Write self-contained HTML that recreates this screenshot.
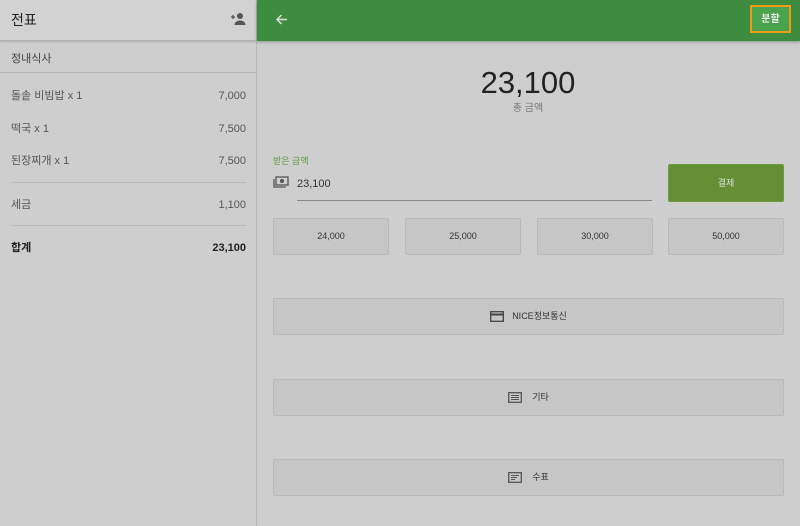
<!DOCTYPE html>
<html><head><meta charset="utf-8"><style>
*{box-sizing:border-box;margin:0;padding:0}
body{width:800px;height:526px;background:#cecece;font-family:"Liberation Sans","Noto Sans CJK KR",sans-serif;position:relative;overflow:hidden;color:#333}
.left{position:absolute;left:0;top:0;width:257px;height:526px;background:#cecece;border-right:1px solid #b8b8b8}
.lh{height:41px;background:#d2d2d2;border-bottom:1px solid #b0b0b0;box-shadow:0 1px 2px rgba(0,0,0,.15);position:relative}
.lh span{position:absolute;left:11px;top:11px;font-size:14px;line-height:18px;color:#222}
.sub{height:32px;border-bottom:1px solid #b8b8b8;font-size:11px;color:#444;padding:11px 0 0 11px;line-height:14px}
.row{position:absolute;left:11px;width:235px;height:14px;font-size:11px;line-height:14px;color:#555;display:flex;justify-content:space-between;align-items:center}
.row span{display:block;line-height:15px;height:14px}
.sep{position:absolute;left:11px;width:235px;height:1px;background:#bbb}
.top{position:absolute;left:257px;top:0;width:543px;height:41px;background:#3d8c40;box-shadow:0 1px 3px rgba(0,0,0,.3)}
.split{position:absolute;left:750px;top:5px;width:41px;height:28px;border:2px solid #f09a1a;background:#49a34c;color:#eee;font-size:10px;font-weight:bold;text-align:center;padding-top:7px;line-height:12px}
.btn{position:absolute;background:#c6c6c6;border:1px solid #b9b9b9;border-radius:2px;font-size:9px;color:#333;display:flex;align-items:center;justify-content:center;line-height:13px}
</style></head><body>
<div class="left">
<div class="lh"><span>전표</span>
<svg style="position:absolute;left:229px;top:12px" width="18" height="14" viewBox="0 0 18 14"><path d="M2 5h4M4 3v4" stroke="#555" stroke-width="1.3"/><circle cx="11" cy="4" r="3" fill="#555"/><path d="M5.5 13c0-3 3-4.5 5.5-4.5s5.5 1.5 5.5 4.5z" fill="#555"/></svg></div>
<div class="sub">정내식사</div>
<div class="row" style="top:89px"><span>돌솥 비빔밥 x 1</span><span>7,000</span></div>
<div class="row" style="top:122px"><span>떡국 x 1</span><span>7,500</span></div>
<div class="row" style="top:154px"><span>된장찌개 x 1</span><span>7,500</span></div>
<div class="sep" style="top:182px"></div>
<div class="row" style="top:198px"><span>세금</span><span>1,100</span></div>
<div class="sep" style="top:225px"></div>
<div class="row" style="top:241px;color:#222;font-weight:bold"><span>합계</span><span>23,100</span></div>
</div>
<div class="top">
<svg style="position:absolute;left:18px;top:13px" width="13" height="13" viewBox="0 0 13 13"><path d="M12 6.5H2M6.5 2L2 6.5 6.5 11" stroke="#ddd" stroke-width="1.5" fill="none"/></svg>
</div>
<div class="split">분할</div>
<div style="position:absolute;left:428px;top:66px;width:200px;text-align:center;font-size:31px;line-height:34px;color:#222">23,100</div>
<div style="position:absolute;left:428px;top:102px;width:200px;text-align:center;font-size:10px;line-height:13px;color:#777">총 금액</div>
<div style="position:absolute;left:273px;top:155px;font-size:9px;line-height:12px;color:#5f9a3f">받은 금액</div>
<svg style="position:absolute;left:273px;top:176px" width="16" height="12" viewBox="0 0 16 12"><rect x="3" y="1" width="12" height="8" fill="none" stroke="#555" stroke-width="1.3"/><circle cx="9" cy="5" r="2" fill="#555"/><path d="M1 3v8h12" fill="none" stroke="#555" stroke-width="1.3"/></svg>
<div style="position:absolute;left:297px;top:177px;font-size:11px;line-height:14px;color:#333">23,100</div>
<div style="position:absolute;left:297px;top:200px;width:355px;height:1px;background:#888"></div>
<div class="btn" style="left:668px;top:164px;width:116px;height:38px;background:#658f35;border-color:#6e9a3c;color:#ddd">결제</div>
<div class="btn" style="left:273px;top:218px;width:116px;height:37px">24,000</div>
<div class="btn" style="left:405px;top:218px;width:116px;height:37px">25,000</div>
<div class="btn" style="left:537px;top:218px;width:116px;height:37px">30,000</div>
<div class="btn" style="left:668px;top:218px;width:116px;height:37px">50,000</div>
<div class="btn" style="left:273px;top:298px;width:511px;height:37px"><svg style="margin-right:8px" width="14" height="11" viewBox="0 0 14 11"><rect x="0.7" y="0.7" width="12.6" height="9.6" fill="none" stroke="#444" stroke-width="1.3"/><rect x="1" y="2.5" width="12" height="2" fill="#444"/></svg>NICE정보통신</div>
<div class="btn" style="left:273px;top:379px;width:511px;height:37px"><svg style="margin-right:10px" width="14" height="11" viewBox="0 0 14 11"><rect x="0.7" y="0.7" width="12.6" height="9.6" fill="none" stroke="#555" stroke-width="1.3"/><path d="M3 3.5h8M3 5.5h8M3 7.5h8" stroke="#555"/></svg>기타</div>
<div class="btn" style="left:273px;top:459px;width:511px;height:37px"><svg style="margin-right:10px" width="14" height="11" viewBox="0 0 14 11"><rect x="0.7" y="0.7" width="12.6" height="9.6" fill="none" stroke="#555" stroke-width="1.3"/><path d="M3 3.5h8M3 5.5h6M3 7.5h4" stroke="#555"/></svg>수표</div>
</body></html>
